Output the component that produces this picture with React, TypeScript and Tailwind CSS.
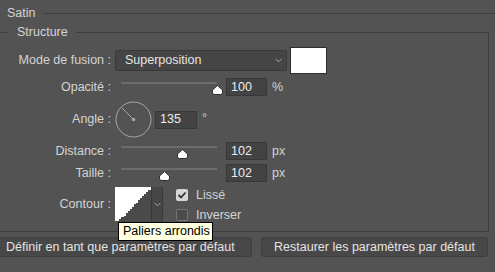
import React from 'react'

const line = 'bg-[#3d3d3d]'

function Thumb() {
  return (
    <svg width="11" height="10" viewBox="0 0 11 10" className="block">
      <path
        d="M5.5 0.5 L10.5 5 V7.5 Q10.5 9.5 8.5 9.5 H2.5 Q0.5 9.5 0.5 7.5 V5 Z"
        fill="#ffffff"
        stroke="#2b2b2b"
      />
    </svg>
  )
}

function Slider({ pos }: { pos: number }) {
  return (
    <div className="relative h-[18px] w-[96px] shrink-0 ml-[6px]">
      <div className="absolute left-0 right-0 top-[4px] h-[2px] bg-[#6c6c6c]" />
      <div className="absolute top-[7px]" style={{ left: pos - 5.5 }}>
        <Thumb />
      </div>
    </div>
  )
}

function NumBox({ value, w = 41 }: { value: string; w?: number }) {
  return (
    <div
      className="h-[18px] border border-[#383838] bg-[#434343] pl-[4px] flex items-center text-[#ececec]"
      style={{ width: w }}
    >
      {value}
    </div>
  )
}

function Label({ children }: { children: React.ReactNode }) {
  return <div className="text-right whitespace-nowrap">{children}</div>
}

function Chevron() {
  return (
    <svg width="7" height="5" viewBox="0 0 7 5">
      <polyline points="0.5,0.8 3.5,3.8 6.5,0.8" fill="none" stroke="#a9a9a9" />
    </svg>
  )
}

function ContourThumb() {
  const steps = [
    [1, 34], [4, 32], [6, 30], [9, 29], [11, 26], [13, 24], [15, 22], [17, 20],
    [19, 17], [21, 16], [23, 13], [25, 11], [27, 9], [29, 7], [31, 5], [33, 3], [36, 2],
  ]
  let d = 'M0 35 L0 34 '
  steps.forEach(([x, y], i) => {
    const prev = i === 0 ? 34 : steps[i - 1][1]
    d += `L${x} ${prev} L${x} ${y} `
  })
  d += 'L36 35 Z'
  return (
    <svg width="36" height="35" viewBox="0 0 36 35" className="block">
      <rect width="36" height="35" fill="#ffffff" />
      <path d={d} fill="#4a4a4a" />
    </svg>
  )
}

export default function App() {
  return (
    <div
      className="relative w-[495px] h-[272px] overflow-hidden bg-[#535353] text-[#d4d4d4] text-[12.5px] leading-none"
      style={{ fontFamily: '"Liberation Sans", Arial, sans-serif' }}
    >
      {/* Satin header */}
      <div className="flex items-center h-[26px] pl-[7px]">
        <span>Satin</span>
        <div className={`ml-[7px] flex-1 h-px ${line}`} />
      </div>

      {/* Structure group */}
      <div className="ml-[-10px] w-[499px]">
        <div className="flex items-center h-[12px]">
          <div className={`w-[17px] h-px ${line}`} />
          <span className="ml-[10px] mr-[8px]">Structure</span>
          <div className="flex-1 h-[6px] self-end border-t border-r border-[#3d3d3d]" />
        </div>

        <div className="border-r border-b border-[#3d3d3d] h-[194px] pt-[9px]">
          <div className="grid grid-cols-[121px_1fr] gap-x-[4px] items-center">
            {/* Mode de fusion */}
            <Label>Mode de fusion :</Label>
            <div className="flex items-center h-[27px]">
              <div className="w-[172px] h-[21px] rounded-[2px] border border-[#393939] bg-[#454545] flex items-center pl-[9px] pr-[4px] text-[#e4e4e4]">
                <span className="flex-1">Superposition</span>
                <Chevron />
              </div>
              <div className="ml-[3px] w-[37px] h-[27px] border border-[#2e2e2e] bg-white" />
            </div>

            {/* Opacité */}
            <div className="mt-[4px]"><Label>Opacité :</Label></div>
            <div className="mt-[4px] flex items-center">
              <Slider pos={96} />
              <div className="ml-[9px]"><NumBox value="100" /></div>
              <span className="ml-[5px]">%</span>
            </div>

            {/* Angle */}
            <div className="mt-[5px]"><Label>Angle :</Label></div>
            <div className="mt-[5px] flex items-center h-[37px]">
              <svg width="37" height="37" viewBox="0 0 37 37" className="block">
                <circle cx="18.5" cy="18.5" r="17.5" fill="none" stroke="#a6a6a6" />
                <line x1="18.5" y1="18.5" x2="7" y2="7" stroke="#a6a6a6" />
                <circle cx="18.5" cy="18.5" r="1.8" fill="#a6a6a6" />
              </svg>
              <div className="ml-[3px]"><NumBox value="135" w={42} /></div>
              <span className="ml-[5px] self-start mt-[11px]">°</span>
            </div>

            {/* Distance */}
            <div className="mt-[4px]"><Label>Distance :</Label></div>
            <div className="mt-[4px] flex items-center">
              <Slider pos={61} />
              <div className="ml-[9px]"><NumBox value="102" /></div>
              <span className="ml-[5px]">px</span>
            </div>

            {/* Taille */}
            <div className="mt-[4px]"><Label>Taille :</Label></div>
            <div className="mt-[4px] flex items-center">
              <Slider pos={43.5} />
              <div className="ml-[9px]"><NumBox value="102" /></div>
              <span className="ml-[5px]">px</span>
            </div>

            {/* Contour */}
            <div className="mt-[5px]"><Label>Contour :</Label></div>
            <div className="mt-[5px] flex items-start">
              <div className="flex h-[35px] border-r border-[#383838]">
                <ContourThumb />
                <div className="w-[11px] h-full bg-[#464646] border-l border-[#383838] flex items-center justify-center">
                  <Chevron />
                </div>
              </div>
              <div className="ml-[13px] mt-[2px] flex flex-col gap-[7px]">
                <div className="flex items-center">
                  <div className="w-[12px] h-[12px] rounded-[2px] bg-[#d6d6d6] flex items-center justify-center">
                    <svg width="10" height="10" viewBox="0 0 10 10">
                      <polyline points="1.5,5 4,7.5 8.5,2.5" fill="none" stroke="#333" strokeWidth="1.8" />
                    </svg>
                  </div>
                  <span className="ml-[8px]">Lissé</span>
                </div>
                <div className="flex items-center">
                  <div className="w-[12px] h-[12px] rounded-[2px] border border-[#757575] bg-[#4b4b4b]" />
                  <span className="ml-[8px]">Inverser</span>
                </div>
              </div>
            </div>
          </div>
        </div>
      </div>

      {/* Buttons */}
      <div className="mt-[5px] flex">
        <button className="ml-[-6px] w-[258px] h-[20px] rounded-[3px] border border-[#3e3e3e] bg-[#484848] text-[#e4e4e4] text-left pl-[11px]">
          Définir en tant que paramètres par défaut
        </button>
        <button className="ml-[9px] w-[227px] h-[20px] rounded-[3px] border border-[#3e3e3e] bg-[#484848] text-[#e4e4e4]">
          Restaurer les paramètres par défaut
        </button>
      </div>

      {/* Tooltip */}
      <div className="absolute left-[118px] top-[222px] w-[95px] h-[19px] border border-black bg-[#ffffe1] text-black pl-[4px] flex items-center whitespace-nowrap">
        Paliers arrondis
      </div>
    </div>
  )
}
